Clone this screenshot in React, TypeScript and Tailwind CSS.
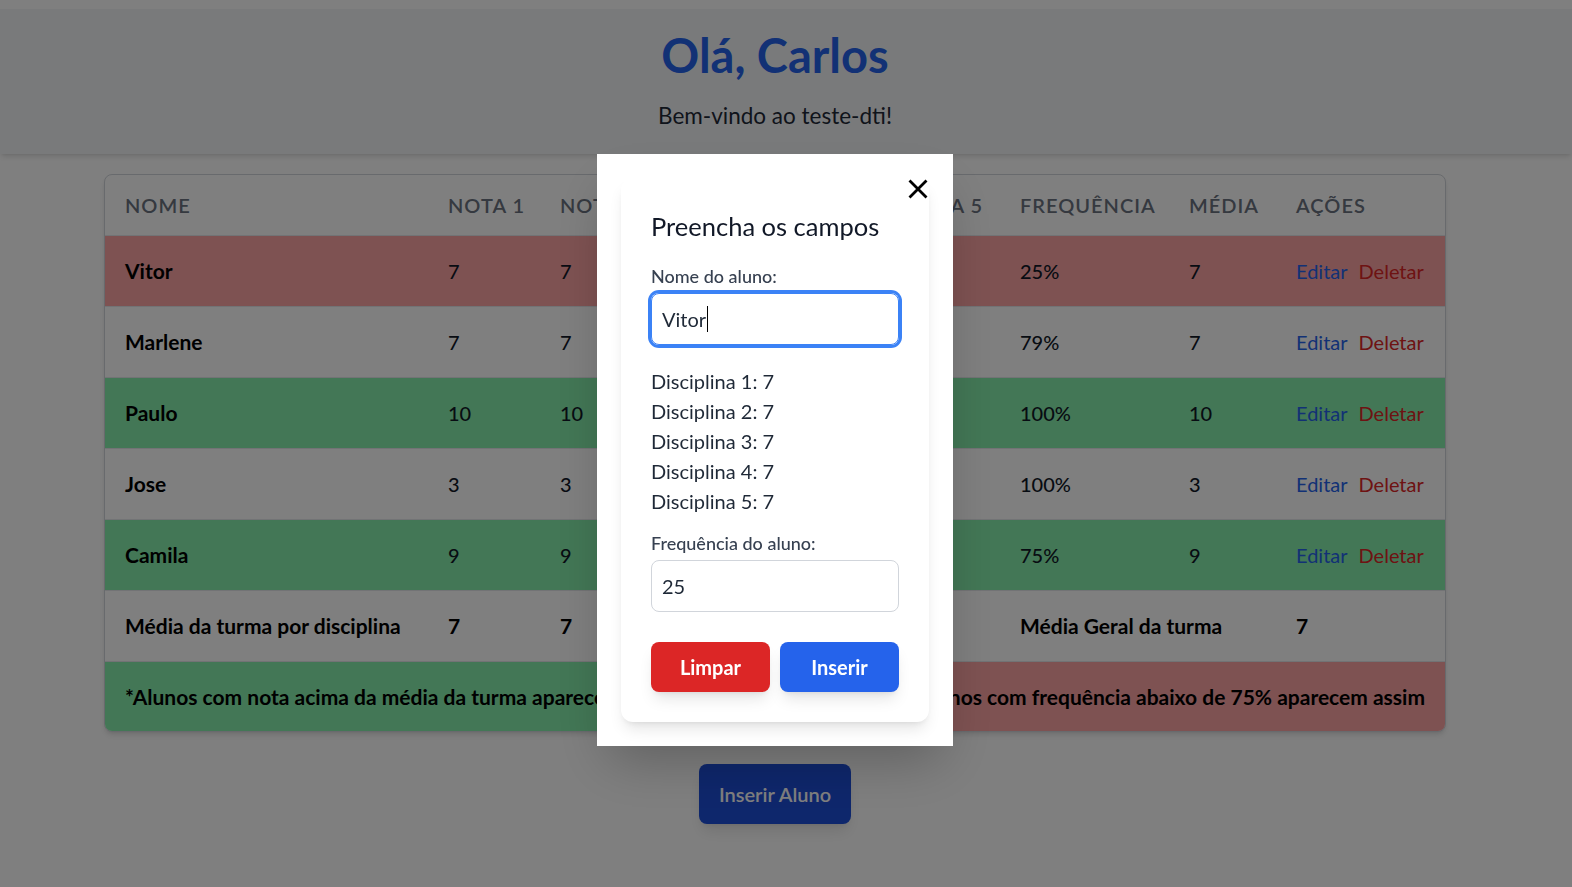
import React from "react";

type Status = "low" | "high" | "normal";

interface Student {
  name: string;
  notas: number[];
  freq: string;
  media: number;
  status: Status;
}

const STUDENTS: Student[] = [
  { name: "Vitor", notas: [7, 7, 7, 7, 7], freq: "25%", media: 7, status: "low" },
  { name: "Marlene", notas: [7, 7, 7, 7, 7], freq: "79%", media: 7, status: "normal" },
  { name: "Paulo", notas: [10, 10, 10, 10, 10], freq: "100%", media: 10, status: "high" },
  { name: "Jose", notas: [3, 3, 3, 3, 3], freq: "100%", media: 3, status: "normal" },
  { name: "Camila", notas: [9, 9, 9, 9, 9], freq: "75%", media: 9, status: "high" },
];

const HEADERS = ["Nome", "Nota 1", "Nota 2", "Nota 3", "Nota 4", "Nota 5", "Frequência", "Média", "Ações"];

const rowBg: Record<Status, string> = {
  low: "bg-[#fca5a5]",
  high: "bg-[#86efac]",
  normal: "bg-white",
};

function StudentsTable() {
  return (
    <div className="mx-auto mt-5 w-[1342px] overflow-hidden rounded-lg border border-[#d1d5db] bg-white shadow-md">
      <table className="w-full table-fixed border-collapse text-left text-xl text-[#111827]">
        <colgroup>
          <col className="w-[323px]" />
          <col className="w-[112px]" />
          <col className="w-[112px]" />
          <col className="w-[117px]" />
          <col className="w-[117px]" />
          <col className="w-[114px]" />
          <col className="w-[169px]" />
          <col className="w-[107px]" />
          <col />
        </colgroup>
        <thead>
          <tr className="h-[60px] border-b border-[#e5e7eb]">
            {HEADERS.map((h) => (
              <th
                key={h}
                className="whitespace-nowrap px-5 align-middle text-xl font-semibold uppercase tracking-wider text-[#6b7280]"
              >
                {h}
              </th>
            ))}
          </tr>
        </thead>
        <tbody>
          {STUDENTS.map((s) => (
            <tr key={s.name} className={`h-[71px] border-b border-[#e5e7eb] ${rowBg[s.status]}`}>
              <td className="px-5 text-[21px] font-bold text-black">{s.name}</td>
              {s.notas.map((n, i) => (
                <td key={i} className="px-5 font-medium">
                  {n}
                </td>
              ))}
              <td className="px-5 font-medium">{s.freq}</td>
              <td className="px-5 font-medium">{s.media}</td>
              <td className="whitespace-nowrap px-5">
                <button type="button" className="mr-[11px] text-[#2563eb]">
                  Editar
                </button>
                <button type="button" className="text-[#dc2626]">
                  Deletar
                </button>
              </td>
            </tr>
          ))}
          <tr className="h-[71px] border-b border-[#e5e7eb] bg-white text-[21px] font-bold text-black">
            <td className="whitespace-nowrap px-5">Média da turma por disciplina</td>
            {[7, 7, 7, 7, 7].map((n, i) => (
              <td key={i} className="px-5">
                {n}
              </td>
            ))}
            <td colSpan={2} className="whitespace-nowrap px-5">
              Média Geral da turma
            </td>
            <td className="px-5">7</td>
          </tr>
          <tr className="h-[70px] text-[21px] font-bold text-black">
            <td colSpan={5} className="whitespace-nowrap bg-[#86efac] px-5">
              *Alunos com nota acima da média da turma aparecem assim
            </td>
            <td colSpan={4} className="whitespace-nowrap bg-[#fca5a5] px-5 text-right">
              *Alunos com frequência abaixo de 75% aparecem assim
            </td>
          </tr>
        </tbody>
      </table>
    </div>
  );
}

function StudentModal() {
  const disciplinas = [7, 7, 7, 7, 7];
  return (
    <div className="fixed inset-0 z-10 flex items-center justify-center bg-black/50 pr-[22px] pt-[12px]">
      <div className="relative w-[356px] bg-white p-6 shadow-2xl">
        <button type="button" className="absolute right-[25px] top-[25px] text-black" aria-label="Fechar">
          <svg width="20" height="20" viewBox="0 0 20 20" fill="none" stroke="currentColor" strokeWidth="2.8">
            <path d="M1.5 1.5 18.5 18.5M18.5 1.5 1.5 18.5" />
          </svg>
        </button>
        <div className="rounded-xl bg-white px-[30px] pb-[30px] pt-8 shadow-lg">
          <h2 className="text-[25.5px] leading-8 text-[#111827]">Preencha os campos</h2>

          <label className="mb-[3px] mt-5 block text-lg font-medium leading-7 text-[#374151]">Nome do aluno:</label>
          <div className="flex h-[52px] items-center rounded-lg border border-[#3b82f6] px-2.5 text-xl text-[#1f2937] ring-[3px] ring-[#3b82f6]">
            Vitor
            <span className="ml-px inline-block h-[26px] w-px bg-black" />
          </div>

          <div className="mt-[21px] text-xl leading-[30px] text-[#1f2937]">
            {disciplinas.map((n, i) => (
              <p key={i}>
                Disciplina {i + 1}: {n}
              </p>
            ))}
          </div>

          <label className="mb-[3px] mt-[13px] block text-lg font-medium leading-7 text-[#374151]">
            Frequência do aluno:
          </label>
          <div className="flex h-[52px] items-center rounded-lg border border-[#d1d5db] px-2.5 text-xl text-[#1f2937]">
            25
          </div>

          <div className="mt-[30px] flex gap-2.5">
            <button
              type="button"
              className="h-[50px] flex-1 rounded-lg bg-[#dc2626] text-xl font-bold text-white shadow-lg"
            >
              Limpar
            </button>
            <button
              type="button"
              className="h-[50px] flex-1 rounded-lg bg-[#2563eb] text-xl font-bold text-white shadow-lg"
            >
              Inserir
            </button>
          </div>
        </div>
      </div>
    </div>
  );
}

export default function App() {
  return (
    <div className="min-h-screen bg-white pt-[9px] font-['Segoe_UI',Lato,sans-serif]">
      <header className="bg-[#f3f4f6] pb-[22px] pr-[22px] pt-6 text-center shadow-md">
        <h1 className="text-[47px] font-bold leading-[45px] text-[#2563eb]">Olá, Carlos</h1>
        <p className="mt-[22px] text-[22.5px] leading-8 text-[#1f2937]">Bem-vindo ao teste-dti!</p>
      </header>

      <main className="pb-10 pr-[22px]">
        <StudentsTable />
        <div className="mt-8 flex justify-center">
          <button
            type="button"
            className="rounded-lg bg-[#1d4ed8] px-5 py-4 text-xl font-semibold leading-7 text-white shadow-lg"
          >
            Inserir Aluno
          </button>
        </div>
      </main>

      <StudentModal />
    </div>
  );
}
